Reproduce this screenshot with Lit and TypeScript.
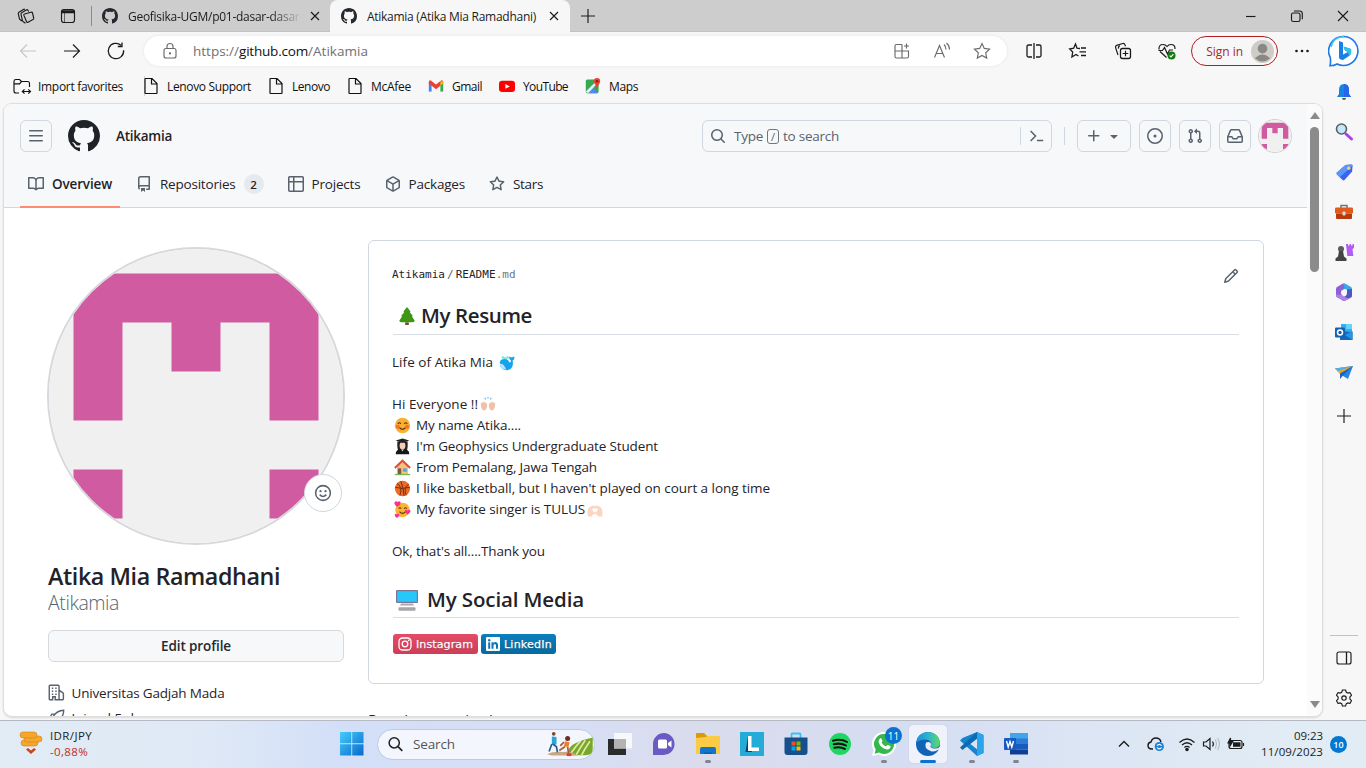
import { LitElement, html, css, svg, nothing } from "lit";
import { customElement, property } from "lit/decorators.js";
import { classMap } from "lit/directives/class-map.js";

/** Single-line text that spreads its letters to fill a given measure. */
@customElement("fit-text")
class FitText extends LitElement {
  @property({ type: Number }) w = 0;
  @property() text = "";
  static styles = css`
    :host { display: inline-block; white-space: nowrap; flex: none; }
    span { display: inline-block; }
  `;
  render() {
    return html`<span>${this.text}</span>`;
  }
  updated() {
    const s = this.renderRoot.querySelector("span") as HTMLElement;
    this.style.width = this.w + "px";
    s.style.letterSpacing = "0px";
    const natural = s.getBoundingClientRect().width;
    s.style.letterSpacing = ((this.w - natural) / this.text.length).toFixed(3) + "px";
  }
}

const t = (text: string, w: number) => html`<fit-text .text=${text} .w=${w}></fit-text>`;

const oct: Record<string, string> = {
  bars: "M1 2.75A.75.75 0 0 1 1.75 2h12.5a.75.75 0 0 1 0 1.5H1.75A.75.75 0 0 1 1 2.75Zm0 5A.75.75 0 0 1 1.75 7h12.5a.75.75 0 0 1 0 1.5H1.75A.75.75 0 0 1 1 7.75ZM1.75 12h12.5a.75.75 0 0 1 0 1.5H1.75a.75.75 0 0 1 0-1.5Z",
  mark: "M8 0c4.42 0 8 3.58 8 8a8.013 8.013 0 0 1-5.45 7.59c-.4.08-.55-.17-.55-.38 0-.27.01-1.13.01-2.2 0-.75-.25-1.23-.54-1.48 1.78-.2 3.65-.88 3.65-3.95 0-.88-.31-1.59-.82-2.15.08-.2.36-1.02-.08-2.12 0 0-.67-.22-2.2.82-.64-.18-1.32-.27-2-.27-.68 0-1.36.09-2 .27-1.53-1.03-2.2-.82-2.2-.82-.44 1.1-.16 1.92-.08 2.12-.51.56-.82 1.28-.82 2.15 0 3.06 1.86 3.75 3.64 3.95-.23.2-.44.55-.51 1.07-.46.21-1.61.55-2.33-.66-.15-.24-.6-.83-1.23-.82-.67.01-.27.38.01.53.34.19.73.9.82 1.13.16.45.68 1.31 2.69.94 0 .67.01 1.3.01 1.49 0 .21-.15.45-.55.38A7.995 7.995 0 0 1 0 8c0-4.42 3.58-8 8-8Z",
  book: "M0 1.75A.75.75 0 0 1 .75 1h4.253c1.227 0 2.317.59 3 1.501A3.743 3.743 0 0 1 11.006 1h4.245a.75.75 0 0 1 .75.75v10.5a.75.75 0 0 1-.75.75h-4.507a2.25 2.25 0 0 0-1.591.659l-.622.621a.75.75 0 0 1-1.06 0l-.622-.621A2.25 2.25 0 0 0 5.258 13H.75a.75.75 0 0 1-.75-.75Zm7.251 10.324.004-5.073-.002-2.253A2.25 2.25 0 0 0 5.003 2.5H1.5v9h3.757a3.75 3.75 0 0 1 1.994.574ZM8.755 4.75l-.004 7.322a3.752 3.752 0 0 1 1.992-.572H14.5v-9h-3.495a2.25 2.25 0 0 0-2.25 2.25Z",
  repo: "M2 2.5A2.5 2.5 0 0 1 4.5 0h8.75a.75.75 0 0 1 .75.75v12.5a.75.75 0 0 1-.75.75h-2.5a.75.75 0 0 1 0-1.5h1.75v-2h-8a1 1 0 0 0-.714 1.7.75.75 0 1 1-1.072 1.05A2.495 2.495 0 0 1 2 11.5Zm10.5-1h-8a1 1 0 0 0-1 1v6.708A2.486 2.486 0 0 1 4.5 9h8ZM5 12.25a.25.25 0 0 1 .25-.25h3.5a.25.25 0 0 1 .25.25v3.25a.25.25 0 0 1-.4.2l-1.45-1.087a.249.249 0 0 0-.3 0L5.4 15.7a.25.25 0 0 1-.4-.2Z",
  table: "M0 1.75C0 .784.784 0 1.75 0h12.5C15.216 0 16 .784 16 1.75v12.5A1.75 1.75 0 0 1 14.25 16H1.75A1.75 1.75 0 0 1 0 14.25ZM6.5 6.5v8h7.75a.25.25 0 0 0 .25-.25V6.5Zm8-1.5V1.75a.25.25 0 0 0-.25-.25H6.5V5Zm-13 1.5v7.75c0 .138.112.25.25.25H5v-8ZM5 5V1.5H1.75a.25.25 0 0 0-.25.25V5Z",
  pkg: "m8.878.392 5.25 3.045c.54.314.872.89.872 1.514v6.098a1.75 1.75 0 0 1-.872 1.514l-5.25 3.045a1.75 1.75 0 0 1-1.756 0l-5.25-3.045A1.75 1.75 0 0 1 1 11.049V4.951c0-.624.332-1.201.872-1.514L7.122.392a1.75 1.75 0 0 1 1.756 0ZM7.875 1.69l-4.63 2.685L8 7.133l4.755-2.758-4.63-2.685a.248.248 0 0 0-.25 0ZM2.5 5.677v5.372c0 .09.047.171.125.216l4.625 2.683V8.432Zm6.25 8.271 4.625-2.683a.25.25 0 0 0 .125-.216V5.677L8.75 8.432Z",
  star: "M8 .25a.75.75 0 0 1 .673.418l1.882 3.815 4.21.612a.75.75 0 0 1 .416 1.279l-3.046 2.97.719 4.192a.751.751 0 0 1-1.088.791L8 12.347l-3.766 1.98a.75.75 0 0 1-1.088-.79l.72-4.194L.818 6.374a.75.75 0 0 1 .416-1.28l4.21-.611L7.327.668A.75.75 0 0 1 8 .25Zm0 2.445L6.615 5.5a.75.75 0 0 1-.564.41l-3.097.45 2.24 2.184a.75.75 0 0 1 .216.664l-.528 3.084 2.769-1.456a.75.75 0 0 1 .698 0l2.77 1.456-.53-3.084a.75.75 0 0 1 .216-.664l2.24-2.183-3.096-.45a.75.75 0 0 1-.564-.41L8 2.694Z",
  search: "M10.68 11.74a6 6 0 0 1-7.922-8.982 6 6 0 0 1 8.982 7.922l3.04 3.04a.749.749 0 0 1-.326 1.275.749.749 0 0 1-.734-.215ZM11.5 7a4.499 4.499 0 1 0-8.997 0A4.499 4.499 0 0 0 11.5 7Z",
  plus: "M7.75 2a.75.75 0 0 1 .75.75V7h4.25a.75.75 0 0 1 0 1.5H8.5v4.25a.75.75 0 0 1-1.5 0V8.5H2.75a.75.75 0 0 1 0-1.5H7V2.75A.75.75 0 0 1 7.75 2Z",
  tri: "m4.427 7.427 3.396 3.396a.25.25 0 0 0 .354 0l3.396-3.396A.25.25 0 0 0 11.396 7H4.604a.25.25 0 0 0-.177.427Z",
  issue: "M8 9.5a1.5 1.5 0 1 0 0-3 1.5 1.5 0 0 0 0 3ZM8 0a8 8 0 1 1 0 16A8 8 0 0 1 8 0ZM1.5 8a6.5 6.5 0 1 0 13 0 6.5 6.5 0 0 0-13 0Z",
  pr: "M1.5 3.25a2.25 2.25 0 1 1 3 2.122v5.256a2.251 2.251 0 1 1-1.5 0V5.372A2.25 2.25 0 0 1 1.5 3.25Zm5.677-.177L9.573.677A.25.25 0 0 1 10 .854V2.5h1A2.5 2.5 0 0 1 13.5 5v5.628a2.251 2.251 0 1 1-1.5 0V5a1 1 0 0 0-1-1h-1v1.646a.25.25 0 0 1-.427.177L7.177 3.427a.25.25 0 0 1 0-.354ZM3.75 2.5a.75.75 0 1 0 0 1.5.75.75 0 0 0 0-1.5Zm0 9.5a.75.75 0 1 0 0 1.5.75.75 0 0 0 0-1.5Zm8.25.75a.75.75 0 1 0 1.5 0 .75.75 0 0 0-1.5 0Z",
  inbox: "M2.8 2.06A1.75 1.75 0 0 1 4.41 1h7.18c.7 0 1.333.417 1.61 1.06l2.74 6.395c.04.093.06.194.06.295v4.5A1.75 1.75 0 0 1 14.25 15H1.75A1.75 1.75 0 0 1 0 13.25v-4.5c0-.101.02-.202.06-.295Zm1.61.44a.25.25 0 0 0-.23.152L1.887 8H4.75a.75.75 0 0 1 .6.3L6.625 10h2.75l1.275-1.7a.75.75 0 0 1 .6-.3h2.863L11.82 2.652a.25.25 0 0 0-.23-.152Zm10.09 7h-2.875l-1.275 1.7a.75.75 0 0 1-.6.3h-3.5a.75.75 0 0 1-.6-.3L4.375 9.5H1.5v3.75c0 .138.112.25.25.25h12.5a.25.25 0 0 0 .25-.25Z",
  pencil: "M11.013 1.427a1.75 1.75 0 0 1 2.474 0l1.086 1.086a1.75 1.75 0 0 1 0 2.474l-8.61 8.61c-.21.21-.47.364-.756.445l-3.251.93a.75.75 0 0 1-.927-.928l.929-3.25c.081-.286.235-.547.445-.758l8.61-8.61Zm.176 4.823L9.75 4.81l-6.286 6.287a.253.253 0 0 0-.064.108l-.558 1.953 1.953-.558a.253.253 0 0 0 .108-.064Zm1.238-3.763a.25.25 0 0 0-.354 0L10.811 3.75l1.439 1.44 1.263-1.263a.25.25 0 0 0 0-.354Z",
};

const o = (name: string, size = 16) =>
  html`<svg class="fill" width=${size} height=${size} viewBox="0 0 16 16"><path d=${oct[name]} /></svg>`;

/** Outline icon on a 20px grid. */
const line = (inner: unknown, size = 20) =>
  html`<svg class="line" width=${size} height=${size} viewBox="0 0 20 20">${inner}</svg>`;

/** Full-colour picture on its own grid. */
const pic = (inner: unknown, w: number, h = w, vb = "0 0 20 20") =>
  html`<svg width=${w} height=${h} viewBox=${vb}>${inner}</svg>`;

const identicon = svg`<rect width="420" height="420" fill="#f0f0f0"/>
  <path fill="#d15ba1" d="M35 35H385V245H315V105H245V175H175V105H105V245H35ZM35 315h70v70h-70zM315 315h70v70h-70z"/>`;

const i = {
  spaces: line(svg`<path d="M8.500 8l6.500-1.800q1.200-.3 1.500.8l1.200 5q.3 1.200-.8 1.500l-4.800 2.700q-1.200.5-1.600-.7L7.800 9.200q-.2-1 .7-1.200M9.500 17.200l-2.200-1.500q-.8-.6-1-1.500L5 8.200q-.2-1 .6-1.500l4.700-2.800q.9-.5 1.500.3l1 1.300M6 15l-1.800-1.300q-.7-.5-.9-1.400L2.300 7.700q-.2-1 .6-1.500l4.500-2.800q.8-.5 1.500.2"/>`),
  tabs: line(svg`<rect x="3.500" y="3.500" width="13" height="13" rx="2.500"/><path d="M3.500 5.500h13M3.500 6h13" stroke-width="2.400"/><path d="M6.500 7v9.500" stroke-width=".6"/>`),
  close: line(svg`<path d="M6 6l8 8M14 6l-8 8"/>`),
  add: line(svg`<path d="M10 3v14M3 10h14"/>`),
  min: line(svg`<path d="M5 10.500h9.500"/>`),
  restore: line(svg`<rect x="4.500" y="7" width="8.500" height="8.500" rx="1.800"/><path d="M7 5h5.500q2.800 0 2.800 2.800v5.500"/>`),
  wclose: line(svg`<path d="M5 5l10 10M15 5l-10 10"/>`),
  back: line(svg`<path d="M18 10H2.500M9 3.500L2.500 10l6.500 6.500"/>`),
  fwd: line(svg`<path d="M2 10h15.500M11 3.500l6.500 6.500-6.500 6.500"/>`),
  reload: line(svg`<path d="M17.600 9.200A7.700 7.700 0 1 1 15 4.200M16 1.500v4h-4.200" stroke-width="1.300"/>`),
  lock: line(svg`<rect x="4" y="7.500" width="12" height="9.500" rx="2"/><path d="M7 7.500V5.500a3 3 0 0 1 6 0v2"/><circle cx="10" cy="12.300" r=".6"/>`),
  apps: line(svg`<path d="M10 3.500H4.500Q3 3.500 3 5v10.500Q3 17 4.500 17H15q1.500 0 1.500-1.500V10H3M10 3.500V17M14.500 2.500v5M12 5h5"/>`),
  read: line(svg`<path d="M2.500 16.500L7.500 4.500l5 12M4.200 12.500h6.500M12 3.500q2 2 2 5M14.500 2q3 2.500 3 6.500"/>`),
  star: line(svg`<path d="M10 2.500l2.300 4.900 5.300.7-3.900 3.700 1 5.300L10 14.500l-4.700 2.600 1-5.300-3.900-3.700 5.300-.7z"/>`),
  split: line(svg`<path d="M8 4H4.500Q3 4 3 5.500v9Q3 16 4.500 16H8M12 4h3.500Q17 4 17 5.500v9q0 1.500-1.500 1.500H12M10 2v16" stroke-width="1.300"/>`),
  favs: line(svg`<path d="M12 7.500L9 7.100 7.500 3 5.700 7.200l-4 .8 3 3-.8 5 4.100-2.500 2.500 1.500M13 7h5M11.500 10.800h6.500M13 14.500h5" stroke-width="1.300"/>`),
  coll: line(svg`<rect x="7.500" y="7.500" width="10" height="10" rx="2" stroke-width="1.300"/><path d="M12.500 9.700v5.600M9.700 12.500h5.600M5 14l-2.400-7.400q-.5-1.600 1-2.200L9.800 2.500q1.500-.4 2.100 1.100l.6 1.600M7 4.800q-2 .8-1.500 2.800" stroke-width="1.200"/>`),
  heart: line(svg`<path d="M9.500 16.500L3 10.500M2 8.500Q1.600 3.500 6 3.500q2.500 0 4 2 1.500-2 4-2 4.200 0 4 4.500M1.500 9.500h4l2-3 3 6.500 2-4h3.500" stroke-width="1.200"/><circle cx="14.500" cy="14.500" r="4" fill="#107c10" stroke="none"/><path d="M12.700 14.600l1.300 1.300 2.400-2.700" stroke="#fff"/>`),
  dots: line(svg`<g fill="currentColor" stroke="none"><circle cx="4.500" cy="10" r="1.300"/><circle cx="10" cy="10" r="1.300"/><circle cx="15.500" cy="10" r="1.300"/></g>`),
  folder: line(svg`<path d="M7 17H4Q2 17 2 15V5.200Q2 3.500 4 3.500h3.500l2 2H15.500q2 0 2 2V11M2 7.800h5.500l2-2.300M10.500 15.500h8M12.500 13.300l-2.200 2.200 2.200 2.200M16.300 13.300l2.200 2.200-2.200 2.200" stroke-width="1.150"/>`),
  doc: line(svg`<path d="M4.500 2.500h6.500l5 5v9.500q0 .5-.5.500h-11Q4 17.500 4 17V3q0-.5.500-.5M10.500 2.500v5.500H16" stroke-width="1.200"/>`),
  panel: line(svg`<rect x="3" y="4" width="14" height="12" rx="2"/><path d="M12.500 4v12" stroke-width="1.300"/>`),
  gear: line(svg`<path d="M8.400 2h3.200l.6 2.200 1.500.9 2.200-.6 1.600 2.800-1.600 1.600v2.200l1.600 1.600-1.600 2.800-2.200-.6-1.500.9-.6 2.200H8.400l-.6-2.200-1.500-.9-2.200.6-1.600-2.800 1.600-1.600V8.900L2.500 7.300l1.600-2.800 2.200.6 1.500-.9z" stroke-linejoin="round"/><circle cx="10" cy="10" r="2.200"/>`),
  term: line(svg`<path d="M4 4.500l5.500 5.500L4 15.500M11 15h7" stroke-width="1.700"/>`, 18),
  smile: line(svg`<circle cx="10" cy="10" r="8.200" stroke-width="1.700"/><path d="M6.300 11.800q3.700 4.200 7.400 0" stroke-width="1.700"/><g fill="currentColor" stroke="none"><circle cx="7.200" cy="8" r="1.250"/><circle cx="12.800" cy="8" r="1.250"/></g>`, 18),
  org: line(svg`<path d="M1.500 18.500V2.500q0-1 1-1h9.500q1 0 1 1v16M1.500 18.500h4v-3.500h3v3.500h8.700q.9 0 .9-.9V11.500q0-.6-.5-1L13.200 7.500" stroke-width="1.700"/><path d="M4.500 5h1.700M8.500 5h1.700M4.500 8.500h1.700M8.500 8.500h1.700M4.500 12h1.700M8.500 12h1.700" stroke-width="1.700"/>`, 17),
  rocket: line(svg`<path d="M7 13L5 11Q9 2 18.500 1.500 18.500 11 9 15zM6 10L2 10.500 4.500 6H9" stroke-width="1.600"/>`, 17),
  chev: line(svg`<path d="M5 12.500l5-5 5 5" stroke-width="1.400"/>`),
  wifi: line(svg`<path d="M2.500 8.500q7.500-7 15 0M5 11q5-4.600 10 0M7.400 13.400q2.600-2.200 5.200 0" stroke-width="1.300"/><circle cx="10" cy="15.500" r="1.200" fill="currentColor"/>`),
  vol: line(svg`<path d="M2.500 8v4H5l4 3.500v-11L5 8z" stroke-width="1.200"/><path d="M11.500 7.500q1.800 2.500 0 5"/><path d="M14 5.500q3 4.500 0 9M16.500 4q4 6 0 12" stroke="#b5bcc4"/>`),
  batt: line(svg`<rect x="3" y="6.500" width="13" height="8" rx="2"/><rect x="7" y="8.300" width="7.500" height="4.500" fill="currentColor" stroke="none"/><path d="M17.500 9v3M2 9l2.500-5v3h2.500l-3 5V9z" fill="currentColor"/>`),
  cloud: line(svg`<path d="M7 15H6Q2 15 2 11.500 2 8.500 5 8q1-4 5-4 4 0 5 4" stroke-width="1.400"/><circle cx="13.300" cy="12.500" r="4.600" fill="#1683d8" stroke="none"/><path d="M11 11.700q2.300-2.700 4.600 0M15.600 13.500q-2.300 2.700-4.600 0" stroke="#fff" stroke-width="1.100"/>`),
};

const em = {
  tree: pic(svg`<path d="M8 17h4v3H8z" fill="#7a4a35"/><path d="M10 0l4 5-1 .5 3.500 4.500-1 .5L18.500 15q0 2-2 2h-13q-2 0-2-2L4.500 10.500l-1-.5L7 5.500 6 5z" fill="#3f9614"/>`, 18),
  whale: pic(svg`<path d="M4 1l4 2 3-2 2 3-6 2-4-2z" fill="#7fe6e8"/><path d="M1 9q1-4 6-4 4 0 6 4 2 1 2-2-3-2-2-5l3 1 3-1q1 4-2 5 2 11-7 12-9 0-9-10" fill="#14a3ee"/><path d="M1 11q5-1 8 7-7 1-8-7" fill="#b9e4fb"/>`, 16),
  hands: pic(svg`<path d="M1 9q1-4 3-1.500l1-2 1.500 1.500Q9.500 8 8.800 12q-.8 5-3.800 5-3.500-1-4-8M19 9q-1-4-3-1.500l-1-2-1.500 1.500q-3 1-2.300 5 .8 5 3.800 5 3.500-1 4-8" fill="#efc0aa"/><path d="M6 1l1 2M10 0v2M14 1l-1 2" stroke="#55b4f0" stroke-width="1.400"/>`, 16),
  blush: pic(svg`<circle cx="10" cy="10" r="9" fill="#fbb02e"/><circle cx="4.500" cy="11.500" r="2.400" fill="#f6703a"/><circle cx="15.500" cy="11.500" r="2.400" fill="#f6703a"/><path d="M4.500 8q1.800-2.500 3.600 0M12 8q1.800-2.500 3.600 0M6.500 12.500q3.500 4 7 0" fill="none" stroke="#5a3416" stroke-width="1.400"/>`, 17),
  grad: pic(svg`<path d="M4 4q-.5 8 1 11h10Q16.500 12 16 4z" fill="#2a2020"/><path d="M2 19q0-6 8-6t8 6z" fill="#17171b"/><ellipse cx="10" cy="9" rx="3.400" ry="4.300" fill="#f2cdb8"/><path d="M2 3l8-2.500L18 3l-8 3z" fill="#222"/><path d="M8.500 13.500l1.500 2 1.500-2z" fill="#eee"/>`, 17),
  house: pic(svg`<path d="M3.500 9L10 3l6.500 6v9h-13z" fill="#f6c37c"/><path d="M1 10.500L10 2l9 8.500" fill="none" stroke="#e8483a" stroke-width="2.400"/><rect x="4.500" y="11" width="4" height="7" fill="#7b5a45"/><rect x="10.500" y="11" width="4.500" height="4" fill="#55a7ea"/><path d="M1 17.500h18V19H1z" fill="#76b64a"/>`, 17),
  ball: pic(svg`<circle cx="10" cy="10" r="9" fill="#ee6a22"/><path d="M8 1.200q3 8 4 17.600M1.300 8.500q8 3 17.400 0M3.500 4q7 4 3.500 14M17.500 5q-7 4-3 13" fill="none" stroke="#6d2b12" stroke-width="1.100"/>`, 17),
  love: pic(svg`<circle cx="10" cy="10.500" r="8.500" fill="#fbb42e"/><path d="M5.500 9q1.500-2 3 0M12 9q1.500-2 3 0M6.500 12.500q3.500 4 7 0" fill="none" stroke="#5a3416" stroke-width="1.300"/><g fill="#ff2d92"><path d="M4 7Q-1 3.500 1 1q2-1.500 3 .5Q5.500-.5 7.500 1 9 3.500 4 7M16 16q-4.500-3-3-5 2-1.500 3 .5 1.500-2 3-.5 1.500 2-3 5M3.500 20q-3.500-2.500-2.500-4.500 1.500-1.200 2.500.5 1-1.700 2.500-.5 1 2-2.500 4.500"/></g>`, 17),
  heartHands: pic(svg`<path d="M1 18q-.5-5 0-8 1-4 4.500-5 3-1.500 4.500.5 1.500-2 4.500-.5 3.500 1 4.500 5 .5 3 0 8h-5q-1-3-4-3t-4 3zM10 13.500q4.500-3 3-5-2-1.500-3 .5-1-2-3-.5-1.500 2 3 5" fill="#fbd5c2" fill-rule="evenodd"/>`, 16),
  pc: pic(svg`<rect x="1" y="1" width="22" height="13" rx="1" fill="#7f7396"/><rect x="2.200" y="2.200" width="19.600" height="10.600" fill="#27c6fb"/><path d="M6 14.500h12l1 2H5z" fill="#a9a9ae"/><rect x="3.500" y="18.300" width="17" height="3.500" rx="1" fill="#a6a6aa"/>`, 24, 24, "0 0 24 24"),
};

const side = [
  pic(svg`<path d="M10 2q5 0 5 6v4l2 3H3l2-3V8q0-6 5-6" fill="#1684e0"/><path d="M10 2q5 0 5 6v4l2 3h-7z" fill="#2567e8"/><path d="M8 16h4q0 2-2 2t-2-2" fill="#555b66"/>`, 20),
  pic(svg`<path d="M12 12l5.500 5" stroke="#b03df0" stroke-width="3" stroke-linecap="round"/><circle cx="7.500" cy="7" r="5" fill="#c4e8fb" stroke="#5b6066" stroke-width="1.600"/>`, 20),
  pic(svg`<path d="M11 2l6-.5q1.500 0 1.500 1.500L18 9l-8 9q-1 .7-2 0l-6-6q-.7-1 0-2z" fill="#3a62f3"/><path d="M11 2l6-.5q1.500 0 1.500 1.500L5 15l-3-3q-.7-1 0-2z" fill="#5b97fb"/><circle cx="14.500" cy="5.500" r="1.800" fill="#ffd35a"/>`, 19),
  pic(svg`<path d="M7 6V3.500h6V6" fill="none" stroke="#77716f" stroke-width="1.500"/><rect x="1" y="5.500" width="18" height="6" rx="1.300" fill="#e2591d"/><path d="M2 11.500h16V16q0 1-1 1H3q-1 0-1-1z" fill="#b83a0c"/><rect x="8.500" y="9.500" width="3" height="4" rx="1" fill="#ddd"/>`, 20),
  pic(svg`<path d="M12 2h2v1.500h1.500V2h1.500v1.500h1.500V2H20v4l-1.500 1 .8 7h-6z" fill="#b25cf5"/><circle cx="7" cy="7" r="3" fill="#5b5b5b"/><path d="M5 9h4l1 5.500 2.500 2V19H1.500v-2.500L4 14.500z" fill="#444"/>`, 20),
  pic(svg`<path d="M9 1.500q1-.5 2 0l6 3.500q1 .5 1 2v4l-5.500-3.500Q10.500 6 8 8.500L7.500 3z" fill="#35a8ee"/><path d="M18 7v7q0 1-1 1.600l-6 3.200q-1 .5-2 0l-2.500-2 5-2.800q1.500-1 1.500-3V7.500z" fill="#4b57c4"/><path d="M9 1.500L3 5Q2 5.600 2 7v6q0 2 1.500 2.500L7 17l1-4q-1-1-1-2.500Q7 8 9 7l2-1z" fill="#8c62d3"/><path d="M2 12.500q0 2 1 2.700l6 3.500q1 .5 2 0l4-2.200q-4-.5-7-3.500z" fill="#b080e6"/>`, 20),
  pic(svg`<path d="M7 2h11v9H7z" fill="#33b1ee"/><path d="M12 2h6v5h-6z" fill="#66d3fa"/><path d="M6 9l12.500 1v8H6z" fill="#1269bd"/><path d="M18.500 9v9L11 13z" fill="#2a93df"/><rect x="1" y="5.500" width="10" height="10" rx="1" fill="#0f62b5"/><circle cx="6" cy="10.500" r="2.500" fill="none" stroke="#fff" stroke-width="1.500"/>`, 20),
  pic(svg`<path d="M1 6.500L19 4l-5 13-5-3z" fill="#2786e5"/><path d="M1 6.500L19 4 6 12z" fill="#f3a51c"/><path d="M1 6.500L19 4 4 9z" fill="#43b3f2"/><path d="M6 11.500v5.500l3-3.500L19 4z" fill="#1f62c4"/>`, 20),
];

const bing = pic(svg`<path d="M16 1.500A14.500 14.500 0 1 1 9 29q-3 1.800-7 1.800.8-3 .4-8A14.500 14.500 0 0 1 16 1.500z" fill="#fff" stroke="#1d78e8" stroke-width="1.600"/><path d="M3 12Q5 2 16 1.500" fill="none" stroke="#36c5f0" stroke-width="1.600"/><path d="M11 6l4 1.500v12L20 17l-3-1.500-1.500-4L23 14q1 5-2 7l-6 4q-3 0-4-2z" fill="#1a7fe6"/><path d="M15.500 11.500L23 14q1 5-2 7l-1-4-3-1.500z" fill="#2fc0ee"/>`, 32, 32, "0 0 32 32");

const maps = pic(svg`<rect x="1" y="2" width="16" height="17" rx="2" fill="#34a853"/><path d="M3 19L10 11l6 8z" fill="#4a8af4"/><path d="M1 17L15 3l2 2L4 19z" fill="#e9eef2"/><path d="M15 0q4 0 4 4 0 2-2 4.500L15 13l-2-4.500Q11 6 11 4q0-4 4-4" fill="#ea4335"/><circle cx="15" cy="4" r="1.500" fill="#8b1a12"/>`, 16);
const gmail = pic(svg`<path d="M1 17V5h3.500v12z" fill="#4285f4"/><path d="M15.500 17V5H19v12z" fill="#34a853"/><path d="M1 5q0-2.500 2.500-2L10 8l6.500-5Q19 2.500 19 5v2l-9 7-9-7z" fill="#ea4335"/><path d="M15.500 4L19 4.500V7l-3.500 2.700z" fill="#fbbc04"/>`, 16);
const yt = pic(svg`<rect x="0" y="3.500" width="20" height="14" rx="4" fill="#f00"/><path d="M8 7.500l5.500 3L8 13.500z" fill="#fff"/>`, 16);

const coins = pic(svg`<g fill="#f5a62c" stroke="#d9820f" stroke-width=".6"><rect x="2" y="9" width="17" height="6" rx="3"/><rect x="5" y="5" width="18" height="6" rx="3"/><rect x="1" y="1" width="17" height="6" rx="3"/></g><path d="M7 18.500l5 4.500 5-4.500-2-1.500-3 2.500L9 17z" fill="#c8451d"/>`, 24, 24, "0 0 24 24");
const win = pic(svg`<defs><linearGradient id="w" x1="0" y1="0" x2="1" y2="1"><stop offset="0" stop-color="#45cdfb"/><stop offset="1" stop-color="#0669cc"/></linearGradient></defs><path fill="url(#w)" d="M0 0h11.300v11.300H0zM12.200 0h11.300v11.300H12.200zM0 12.200h11.300v11.300H0zM12.200 12.200h11.300v11.300H12.200z"/>`, 23.5, 23.5, "0 0 23.5 23.5");
const runners = pic(svg`<path d="M24 26q-2-9 8-13 8-4 18-6v12q0 7-8 7z" fill="#78a829"/><path d="M26 25q6-9 11-14M32 26q5-9 10-16M38 26q4-8 9-15" fill="none" stroke="#e3e8a6" stroke-width="1.800"/><path d="M1 25q6-3 17-2.500 10-1 16 4H6z" fill="#c9a781"/><circle cx="8" cy="3" r="2" fill="#7c4a30"/><path d="M6 6l5 .5 0 8H6z" fill="#2aa4dd"/><path d="M7 14l4 3 1 6M6 14l-3 8" fill="none" stroke="#2b5b86" stroke-width="1.800"/><circle cx="23" cy="8" r="2.700" fill="#6d2f22"/><path d="M20 11l5 1-1 5h-5z" fill="#ee7d2e"/><path d="M23 17l1 8M20 17l-6 4M19 12l-4 4" fill="none" stroke="#a85a3a" stroke-width="1.800"/><path d="M22 24h5v3h-5z" fill="#e23c2c"/>`, 47, 26, "0 0 50 28");

const g24 = (inner: unknown) => pic(inner, 24, 24, "0 0 24 24");
const apps = [
  { icon: g24(svg`<rect x="0" y="7" width="18" height="16" fill="#2a2b2d"/><rect x="6" y="1" width="18" height="15.500" fill="#fafafa" opacity=".92"/><rect x="6" y="7" width="12" height="9.500" fill="#b3b3b3"/>`) },
  { icon: g24(svg`<path d="M12 1a11 11 0 1 1-1 22H1V12A11 11 0 0 1 12 1" fill="#6a5ac4"/><rect x="6" y="7.500" width="9" height="9" rx="1.500" fill="#fff"/><path d="M16 11l3.500-2.500v7L16 13z" fill="#fff"/>`) },
  { icon: g24(svg`<path d="M0 2q0-1 1-1h7l3 3v3H0z" fill="#d99a0e"/><path d="M0 6l10-1 1-1h12q1 0 1 1v17H0z" fill="#fccb45"/><path d="M4 22v-5q0-2 2-2h12q2 0 2 2v5z" fill="#1275ca"/><path d="M8 20.500h8V22H8z" fill="#0c5da8"/>`), run: true },
  { icon: g24(svg`<rect width="24" height="24" fill="#24acd9"/><path d="M8 4L5.500 20H12z" fill="#123f63"/><path d="M8 4h3.500v11.500H19V19H8z" fill="#fff"/>`) },
  { icon: g24(svg`<path d="M7.500 6V2.500q0-1 1-1h7q1 0 1 1V6" fill="none" stroke="#3abff5" stroke-width="1.800"/><path d="M.5 5.500h23V20q0 3-3 3h-17q-3 0-3-3z" fill="#154f8c"/><path d="M7.500 9.500h4v4h-4z" fill="#f25022"/><path d="M12.500 9.500h4v4h-4z" fill="#7fba00"/><path d="M7.500 14.500h4v4h-4z" fill="#00a4ef"/><path d="M12.500 14.500h4v4h-4z" fill="#ffb900"/>`) },
  { icon: g24(svg`<circle cx="12" cy="12" r="11" fill="#1ed760"/><path d="M5 8.700q8-2.200 14 1.300M5.700 12.300q7-1.800 12.300 1.200M6.300 15.700q6-1.500 10.500 1.200" fill="none" stroke="#111" stroke-width="2" stroke-linecap="round"/>`) },
  { icon: g24(svg`<path d="M12 0A12 12 0 1 1 6.500 22.600L0 24l1.600-6A12 12 0 0 1 12 0" fill="#fff"/><path d="M12 2A10 10 0 1 1 7 20.600L2.600 21.700 3.700 17.500A10 10 0 0 1 12 2" fill="#35b84b"/><path d="M8 6.500q1-.7 1.500.3l.9 2q.2.600-.8 1.700 1.500 3 4.300 4l1.300-1.400q.5-.4 1 0l2 1q.6.400.2 1.300-1 2.300-3.500 2-6.500-1-8.300-7.400Q6.300 8 8 6.500" fill="#fff"/>`), run: true, badge: "11" },
  { icon: g24(svg`<defs><linearGradient id="e" x1="0" y1="0" x2="1" y2="0"><stop offset="0" stop-color="#1b8fdc"/><stop offset=".5" stop-color="#2bb5cf"/><stop offset="1" stop-color="#5cd962"/></linearGradient></defs><circle cx="12" cy="12" r="12" fill="#1263b5"/><path d="M0 11Q2 0 12.500 0 23 1 24 10.500q0 5.500-6 5.500-3.500 0-3-2.500Q16.500 8 9 7.500 3 7.500 0 11" fill="url(#e)"/><path d="M10 10.500q-2.500 6 4.500 8.500 4 1.500 8-1.500l1.500 1V15q-4 2.500-8 1-2.500-1-1-3Q15 8.500 10 10.500" fill="#e9eff9"/>`), active: true },
  { icon: g24(svg`<path d="M17 0l6.500 3v18L17 24 0 8.500 2.500 6z" fill="#1583cf"/><path d="M17 0l6.500 3v18L17 24z" fill="#2aa5ea"/><path d="M0 15.500L2.500 18 17 6.500V0z" fill="#0a6bb0"/><path d="M17 6.800v10.400L10.400 12z" fill="#dbe2f4"/>`), run: true },
  { icon: g24(svg`<rect x="6" y="1" width="18" height="6" fill="#41a5ee"/><rect x="6" y="6.500" width="18" height="5.500" fill="#2b7cd3"/><rect x="6" y="12" width="18" height="5.500" fill="#185abd"/><rect x="6" y="17.500" width="18" height="5" fill="#103f91"/><rect x="0" y="6" width="12" height="12" rx="1" fill="#185abd"/><path d="M2.500 9l1.700 6L6 9.500 7.800 15 9.500 9" fill="none" stroke="#fff" stroke-width="1.400"/>`), run: true },
];

@customElement("app-root")
class AppRoot extends LitElement {
  static styles = css`
    :host { display: block; width: 1366px; height: 768px; overflow: hidden; background: #f7f7f7; color: #1b1b1b;
      font-family: "Open Sans", "Noto Sans", sans-serif; font-size: 12px; }
    * { box-sizing: border-box; }
    svg { display: block; flex: none; }
    .fill { fill: currentColor; }
    .line { fill: none; stroke: currentColor; stroke-width: 1.15; }
    .row, .strip, .bar, .favs, .top, .nav, .task { display: flex; align-items: center; }
    .c { display: flex; align-items: center; justify-content: center; flex: none; }
    .grow { flex: 1; }

    .strip { height: 32px; background: #cdcdcd; box-shadow: inset 0 -1px #c2c2c2; }
    .strip .tool:first-child { width: 52px; }
    .strip .tool:nth-child(2) { width: 32px; }
    .vsep { width: 1px; height: 20px; background: #8c8c8c; margin-left: 7px; }
    .tab { display: grid; grid-template-columns: 36px 174px 28px; width: 238px; height: 32px; align-items: center; justify-items: start; }
    .tab > svg:first-child { justify-self: center; color: #24292f; }
    .tab > svg:last-child { justify-self: center; }
    .tab > svg:last-child { margin-right: 2px; }
    .tab.on { grid-template-columns: 37px 174px 28px; width: 240px; background: #f7f7f7; border-radius: 8px 8px 0 0; }
    .fade { width: 174px; overflow: hidden; -webkit-mask-image: linear-gradient(90deg, #000 82%, transparent); mask-image: linear-gradient(90deg, #000 82%, transparent); }
    .newtab { width: 35px; }
    .ctl { width: 46px; }

    .bar { height: 38px; }
    .bar .nv:first-child { width: 56px; }
    .bar .nv:nth-child(2) { width: 32px; }
    .bar .nv:nth-child(3) { width: 56px; }
    .dim { color: #c6c6c6; }
    .url { display: grid; grid-template-columns: 49px 689px 40px 40px 40px; width: 863px; height: 30px; border-radius: 15px; background: #fff;
      box-shadow: 0 0 3px #e2e2e2; align-items: center; font-size: 13.5px; color: #707070; }
    .url svg { justify-self: center; color: #6b6b6b; }
    .url > svg:first-child { margin-left: 3px; }
    .url b { font-weight: 400; color: #111; }
    .bt { width: 44.3px; }
    .bt.first { margin-left: 5px; }
    .signin { width: 87px; height: 30px; margin-left: 2px; border: 1px solid #b01e24; border-radius: 15px; color: #a4262c; padding: 0 3px 0 14px;
      justify-content: space-between; display: flex; align-items: center; }
    .bt.dotsb { width: 48px; }
    .bing { width: 36px; }

    .favs { height: 33px; padding-bottom: 1px; }
    .fav { display: flex; align-items: center; margin-right: 9px; color: #111; }
    .fav .c { width: 32px; }
    .favs .fav:first-child { margin: 0 0 0 6px; }
    .fsep { width: 1px; height: 20px; background: #d2d2d2; margin: 0 -10px 0 21px; }

    .body { display: grid; grid-template-columns: 1320px 42px; height: 613px; padding-left: 3px; }
    .frame { display: grid; grid-template-columns: 1303px 15px; height: 614px; border: 1px solid #dedede; border-radius: 9px; overflow: hidden; background: #fff; box-shadow: 0 1px 2px #d8d8d8; }
    .scroll { background: #fbfbfb; display: grid; grid-template-rows: 23px 1fr 23px; justify-items: center; }
    .up, .down { width: 0; height: 0; border: 5px solid transparent; align-self: center; }
    .up { border-bottom: 7px solid #8b8b8b; border-top: 0; }
    .down { border-top: 7px solid #8b8b8b; border-bottom: 0; }
    .thumb { width: 9px; height: 145px; border-radius: 5px; background: #8b8b8b; }

    .page { height: 612px; overflow: hidden; }
    .head { height: 104px; background: #f6f8fa; border-bottom: 1px solid #d0d7de; }
    .top { height: 64px; padding-left: 16px; color: #59636e; }
    .btn { width: 32px; height: 32px; border: 1px solid #d0d7de; border-radius: 6px; }
    .logo { margin: 0 16px; color: #1f2328; }
    .owner { font-size: 13.5px; font-weight: 600; color: #1f2328; }
    .find { display: grid; grid-template-columns: 31px 33px 12px 4px 237px 1px 30px; width: 350px; height: 32px; margin-left: 530px; border: 1px solid #d0d7de; border-radius: 6px;
      align-items: center; font-size: 13.5px; }
    .find > svg { justify-self: center; }
    .find > svg:first-child { margin-right: 1px; }
    .key { height: 15px; border: 1px solid #6e7781; border-radius: 3px; font-size: 11px; }
    .find .lead { grid-column: 5; }
    .v20 { width: 1px; height: 18px; background: #d0d7de; }
    .out { margin: 0 12px; }
    .new { width: 54px; gap: 4px; margin-right: 8px; }
    .sq { margin-right: 8px; }
    .me { width: 34px; height: 34px; border-radius: 50%; border: 1px solid #d0d0d0; overflow: hidden; margin-left: -1px; }
    .nav { height: 32px; padding-left: 24px; font-size: 13.5px; color: #1f2328; }
    .nav .it { display: flex; align-items: center; }
    .nav .it svg { color: #59636e; margin-right: 8px; }
    .nav .on { font-weight: 600; }
    .count { width: 20px; height: 20px; border-radius: 10px; background: #e6e9ed; font-size: 11.5px; margin-left: 8px; font-weight: 600; }
    .g24 { margin-right: 24px; }
    .under { width: 100px; height: 2px; background: #fd8c73; margin: 6px 0 0 16px; position: relative; }

    .cols { display: grid; grid-template-columns: 296px 896px; column-gap: 24px; padding: 32px 0 0 44px; }
    .pic { position: relative; margin-top: 7px; height: 298px; }
    .avatar { width: 298px; height: 298px; margin-left: -1px; border-radius: 50%; overflow: hidden; border: 2px solid #d5d8dc; }
    .status { position: absolute; left: 256px; top: 227px; width: 38px; height: 38px; border: 1px solid #d0d7de; border-radius: 50%; background: #fff; color: #59636e; }
    .name { font-size: 23.3px; line-height: 30px; height: 30px; font-weight: 600; color: #1f2328; margin-top: 16px; }
    .login { font-size: 19.5px; line-height: 24px; height: 24px; font-weight: 300; color: #59636e; }
    .edit { height: 32px; margin-top: 15px; border: 1px solid #d5d8dc; border-radius: 6px; background: #f6f8fa; font-size: 13.5px; font-weight: 600; color: #24292f; }
    .facts { margin-top: 20px; display: grid; gap: 4px; font-size: 13.5px; color: #1f2328; }
    .facts .row { height: 21px; gap: 6.5px; }
    .facts svg { color: #59636e; }

    .card { height: 444px; border: 1px solid #d0d7de; border-radius: 6px; padding: 24px; font-size: 13.5px; color: #1f2328; }
    .file { display: flex; height: 18px; align-items: center; justify-content: space-between; font: 11px "DejaVu Sans Mono", monospace; color: #1f2328; }
    .file .row { margin-left: -1px; }
    .file svg { color: #59636e; margin: 4px 0 0; }
    .mut { color: #6e7781; }
    .sl { margin: 0 2px; color: #59636e; }
    .h { display: flex; align-items: center; border-bottom: 1px solid #d8dee4; font-size: 20.5px; font-weight: 600; color: #1f2328; height: 36px; }
    .h1 { margin: 16px 0 17px; padding-left: 5px; gap: 6px; padding-bottom: 2px; }
    .h2 { margin: 22px 0 16px; padding-left: 2px; gap: 8px; height: 34px; }
    .h1 fit-text { margin: -2px 0 0 -1px; }
    .h2 fit-text { margin-top: -3px; }
    .ln { display: flex; align-items: center; height: 21px; }
    .ln fit-text { margin: -2px 0 0 -1px; }
    .ln.e { gap: 6px; padding-left: 1px; }
    .ln.s { gap: 6px; }
    .ln.z { gap: 2px; }
    .badges { display: flex; gap: 3px; font-size: 10.5px; font-weight: 600; color: #fff; }
    .bd { display: flex; align-items: center; height: 20px; border-radius: 3px; padding-left: 5px; gap: 4px; text-shadow: 0 1px 1px #0005; font-family: "DejaVu Sans", sans-serif; font-weight: 400; font-size: 11px; -webkit-text-stroke: .25px #fff; }
    .ig { width: 85px; background: linear-gradient(#e44c66, #cf3d58); }
    .li { width: 75px; background: linear-gradient(#0c7fbd, #066a9f); }
    .pop { margin-top: 26px; font-size: 15.5px; line-height: 22px; height: 22px; color: #1f2328; }

    .side { display: flex; flex-direction: column; align-items: center; margin-top: -31px; height: 646px; }
    .side .s { width: 42px; height: 40px; }
    .side .p { height: 48px; }
    .hr { width: 28px; height: 1px; background: #c2c2c2; margin-bottom: 2px; }

    .task { height: 48px; margin-top: 4px; padding-bottom: 1px; border-top: 1px solid #b4b9c3; background: linear-gradient(90deg, #e1ecf5 0, #dfe9f6 200px, #d3dff8 340px, #d6dff6 560px, #dadcec 700px, #d5ddf2 900px, #dce6f4 1100px, #e1ecf5 1300px); }
    .money { width: 340px; flex: none; padding-left: 19px; gap: 7px; }
    .money svg { margin-top: -2px; }
    .q { line-height: 16px; font-size: 11.5px; }
    .red { color: #c42b1c; }
    .find2 { display: flex; flex: none; align-items: center; width: 218px; height: 31px; margin: 0 3px 0 13.5px; border-radius: 16px; border: 1px solid #bccbe0; background: #f3f7fd; padding: 0 1px 0 9px; font-size: 13.5px; color: #555; gap: 9px; }
    .app { position: relative; width: 38px; height: 38px; margin: 0 3px; border-radius: 4px; }
    .app.active { background: #eff2fb; box-shadow: 0 0 1px #aab; }
    .dot { position: absolute; bottom: 0; left: 16px; width: 6px; height: 3px; border-radius: 2px; background: #80858f; }
    .active .dot { left: 11px; width: 16px; background: #0a72d0; }
    .num { position: absolute; left: 20px; top: 2px; width: 17px; height: 17px; border-radius: 50%; background: #0a72d0; color: #fff; font-size: 10px; }
    .tray { display: flex; align-items: center; }
    .clock { width: 76px; text-align: right; line-height: 16px; font-size: 11.5px; }
    .n10 { width: 17px; height: 17px; border-radius: 50%; background: #0078d4; color: #fff; font-size: 9px; font-weight: 600; margin: 0 19px 0 7px; }
    .t1 { width: 22px; }
    .t2 { width: 42px; }
    .t3 { width: 20px; }
    .t4 { width: 28px; }
    .t5 { width: 22px; }
  `;

  private fav(icon: unknown, label: string, w: number) {
    return html`<div class="fav"><span class="c">${icon}</span>${t(label, w)}</div>`;
  }

  private tabStrip() {
    return html`<div class="strip">
      <span class="c tool">${i.spaces}</span><span class="c tool">${i.tabs}</span><span class="vsep"></span>
      <div class="tab">${o("mark")}<span class="fade">${t("Geofisika-UGM/p01-dasar-dasar-", 175)}</span>${i.close}</div>
      <div class="tab on">${o("mark")}${t("Atikamia (Atika Mia Ramadhani)", 169)}${i.close}</div>
      <span class="c newtab">${i.add}</span><span class="grow"></span>
      <span class="c ctl">${i.min}</span><span class="c ctl">${i.restore}</span><span class="c ctl">${i.wclose}</span>
    </div>`;
  }

  private toolbar() {
    return html`<div class="bar">
      <span class="c nv dim">${i.back}</span><span class="c nv">${i.fwd}</span><span class="c nv">${i.reload}</span>
      <div class="url">${i.lock}<span class="row">${t("https://", 46)}<b>${t("github.com", 69)}</b>${t("/Atikamia", 60)}</span>${i.apps}${i.read}${i.star}</div>
      <span class="c bt first">${i.split}</span><span class="c bt">${i.favs}</span><span class="c bt">${i.coll}</span><span class="c bt">${i.heart}</span>
      <div class="signin">${t("Sign in", 37)}${pic(svg`<circle cx="12" cy="12" r="12" fill="#cfccc8"/><circle cx="12" cy="9" r="5" fill="#8a8886"/><path d="M4 19q8-8 16 0-8 7-16 0" fill="#8a8886"/>`, 23, 23, "0 0 24 24")}</div>
      <span class="c bt dotsb">${i.dots}</span><span class="c bing">${bing}</span>
    </div>`;
  }

  private header() {
    return html`<div class="head">
      <div class="top">
        <span class="c btn">${o("bars")}</span><span class="logo">${o("mark", 32)}</span><span class="owner">${t("Atikamia", 56)}</span>
        <div class="find">${o("search")}${t("Type", 29)}<span class="c key">/</span><span class="lead">${t("to search", 56)}</span><span class="v20"></span>${i.term}</div>
        <span class="v20 out"></span>
        <span class="c btn new">${o("plus")}${o("tri")}</span>
        <span class="c btn sq">${o("issue")}</span><span class="c btn sq">${o("pr")}</span><span class="c btn sq">${o("inbox")}</span>
        <span class="me">${pic(identicon, 32, 32, "0 0 420 420")}</span>
      </div>
      <div class="nav">
        <span class="it on g24">${o("book")}${t("Overview", 60)}</span>
        <span class="it g24">${o("repo")}${t("Repositories", 75.5)}<span class="c count">2</span></span>
        <span class="it g24">${o("table")}${t("Projects", 49)}</span>
        <span class="it g24">${o("pkg")}${t("Packages", 56.5)}</span>
        <span class="it">${o("star")}${t("Stars", 30)}</span>
      </div>
      <div class="under"></div>
    </div>`;
  }

  private profile() {
    return html`<div>
      <div class="pic"><div class="avatar">${pic(identicon, 294, 294, "0 0 420 420")}</div><span class="c status">${i.smile}</span></div>
      <div class="name">${t("Atika Mia Ramadhani", 232)}</div>
      <div class="login">${t("Atikamia", 71)}</div>
      <div class="c edit">${t("Edit profile", 70)}</div>
      <div class="facts">
        <div class="row">${i.org}${t("Universitas Gadjah Mada", 153)}</div>
        <div class="row">${i.rocket}${t("Joined 5 days ago", 110)}</div>
      </div>
    </div>`;
  }

  private readme() {
    const l = (e: unknown, s: string, w: number) => html`<div class="ln e">${e}${t(s, w)}</div>`;
    return html`<div>
      <div class="card">
        <div class="file"><span class="row">${t("Atikamia", 53)}<span class="sl">/</span>${t("README", 40)}<span class="mut">${t(".md", 20)}</span></span>${o("pencil")}</div>
        <div class="h h1">${em.tree}${t("My Resume", 111)}</div>
        <div class="ln s">${t("Life of Atika Mia", 101)}${em.whale}</div>
        <div class="ln"></div>
        <div class="ln z">${t("Hi Everyone !!", 86)}${em.hands}</div>
        ${l(em.blush, "My name Atika....", 105)}
        ${l(em.grad, "I'm Geophysics Undergraduate Student", 242)}
        ${l(em.house, "From Pemalang, Jawa Tengah", 181)}
        ${l(em.ball, "I like basketball, but I haven't played on court a long time", 354)}
        <div class="ln e">${em.love}<span class="row ln z">${t("My favorite singer is TULUS", 169)}${em.heartHands}</span></div>
        <div class="ln"></div>
        <div class="ln">${t("Ok, that's all....Thank you", 153)}</div>
        <div class="h h2">${em.pc}${t("My Social Media", 157)}</div>
        <div class="badges">
          <span class="bd ig">${pic(svg`<rect x="1" y="1" width="12" height="12" rx="3.500" fill="none" stroke="#fff" stroke-width="1.300"/><circle cx="7" cy="7" r="2.800" fill="none" stroke="#fff" stroke-width="1.300"/><circle cx="10.700" cy="3.400" r=".8" fill="#fff"/>`, 14, 14, "0 0 14 14")}${t("Instagram", 57)}</span>
          <span class="bd li">${pic(svg`<rect width="14" height="14" rx="1" fill="#fff"/><g fill="#0b77b3"><circle cx="3.200" cy="3.200" r="1.200"/><rect x="2.200" y="5.300" width="2" height="6.500"/><path d="M5.500 5.300h2v.9q2-2.300 4 0 .5.700.5 2v3.600h-2V8.600q0-1.600-1.200-1.600T7.500 8.600v3.200h-2z"/></g>`, 14, 14, "0 0 14 14")}${t("LinkedIn", 48)}</span>
        </div>
      </div>
      <div class="pop">${t("Popular repositories", 140)}</div>
    </div>`;
  }

  private taskbar() {
    return html`<div class="task">
      <div class="row money">${coins}<div class="q"><div>${t("IDR/JPY", 42)}</div><div class="red">${t("-0,88%", 38)}</div></div></div>
      <span class="c">${win}</span>
      <div class="find2">${line(svg`<circle cx="8.500" cy="8" r="6" stroke="#222" stroke-width="1.800"/><path d="M13 12.500l5 5" stroke="#222" stroke-width="2"/>`, 17)}${t("Search", 42)}<span class="grow"></span>${runners}</div>
      ${apps.map((a) => html`<span class=${classMap({ c: true, app: true, active: !!a.active })}>${a.icon}${a.run || a.active ? html`<span class="dot"></span>` : nothing}${a.badge ? html`<span class="c num">${a.badge}</span>` : nothing}</span>`)}
      <span class="grow"></span>
      <div class="tray"><span class="c t1">${i.chev}</span><span class="c t2">${i.cloud}</span><span class="c t3">${i.wifi}</span><span class="c t4">${i.vol}</span><span class="c t5">${i.batt}</span>
        <div class="clock"><div>${t("09:23", 29)}</div><div>${t("11/09/2023", 62)}</div></div><span class="c n10">10</span></div>
    </div>`;
  }

  render() {
    return html`
      ${this.tabStrip()}${this.toolbar()}
      <div class="favs">
        ${this.fav(i.folder, "Import favorites", 85)}<span class="fsep"></span>
        ${this.fav(i.doc, "Lenovo Support", 84)}${this.fav(i.doc, "Lenovo", 38)}${this.fav(i.doc, "McAfee", 40)}
        ${this.fav(gmail, "Gmail", 30)}${this.fav(yt, "YouTube", 45)}${this.fav(maps, "Maps", 29)}
      </div>
      <div class="body">
        <div class="frame">
          <div class="page">${this.header()}<div class="cols">${this.profile()}${this.readme()}</div></div>
          <div class="scroll"><span class="up"></span><span class="thumb"></span><span class="down"></span></div>
        </div>
        <div class="side">
          ${side.map((s) => html`<span class="c s">${s}</span>`)}<span class="c s p">${i.add}</span>
          <span class="grow"></span><span class="hr"></span><span class="c s">${i.panel}</span><span class="c s">${i.gear}</span>
        </div>
      </div>
      ${this.taskbar()}
    `;
  }
}
